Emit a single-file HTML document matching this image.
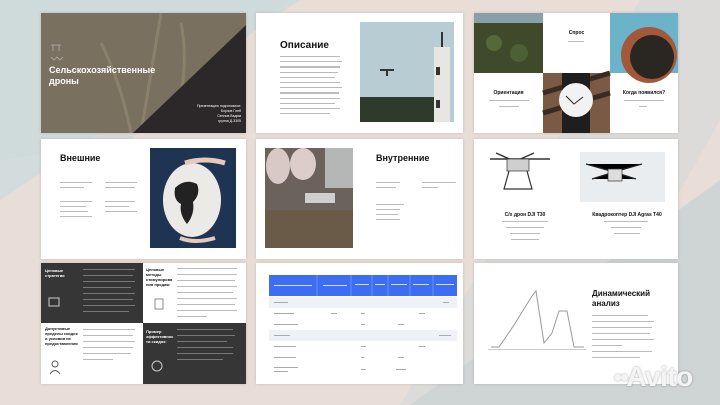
<!DOCTYPE html><html><head><meta charset="utf-8"><style>
*{margin:0;padding:0;box-sizing:border-box}
body{width:720px;height:405px;overflow:hidden;position:relative;font-family:"Liberation Sans",sans-serif;background:#e6dcd6}
.s{position:absolute;background:#fff;overflow:hidden;box-shadow:0 0 3px rgba(0,0,0,.15)}
.a{position:absolute}
.t{position:absolute;font-weight:bold;color:#111}
.l{position:absolute;height:1.2px;background:#bbb}
</style></head><body>
<svg class="a" style="left:0;top:0" width="720" height="405">
<rect width="720" height="405" fill="#e8ddd7"/>
<polygon points="0,0 300,0 0,200" fill="#d3dcdd"/>
<polygon points="640,0 720,0 720,120 560,405 400,405" fill="#dcdbd9"/>
<polygon points="720,180 720,405 410,405" fill="#cfd4d5"/>
<polygon points="0,0 290,0 130,140 0,160" fill="#cdd8da" opacity=".6"/>
</svg>

<div class="s" style="left:41px;top:13px;width:205px;height:120px;background:#7d7463">
<svg class="a" width="205" height="120"><rect width="205" height="120" fill="#7a705f"/><path d="M120 0 Q110 60 100 120 M140 10 Q150 60 130 120 M60 30 Q80 70 90 120" stroke="#8a806c" stroke-width="3" fill="none"/><polygon points="92,120 205,120 205,12" fill="#2c2829"/><g stroke="#bbb" stroke-width="1" fill="none" opacity=".7"><path d="M10 32h10M12 32v6M18 32v6M10 44l3 3 3-3 3 3 3-3"/></g></svg>
<div class="t" style="left:8px;top:52px;color:#fff;font-size:9px;line-height:11px">Сельскохозяйственные<br>дроны</div>
<div class="a" style="right:5px;top:91px;color:#fff;font-size:3.5px;line-height:5px;text-align:right">Презентацию подготовили:<br>Борзов Глеб<br>Сеннов Вадим<br>группа Д-3305</div>
</div>

<div class="s" style="left:256px;top:13px;width:207px;height:120px">
<div class="t" style="left:24px;top:27px;font-size:10px">Описание</div>
<div class="a" style="left:24px;top:43px;width:62px">
<div class="l" style="position:relative;margin-bottom:4px;width:60px"></div><div class="l" style="position:relative;margin-bottom:4px;width:62px"></div><div class="l" style="position:relative;margin-bottom:4px;width:60px"></div><div class="l" style="position:relative;margin-bottom:4px;width:58px"></div><div class="l" style="position:relative;margin-bottom:4px;width:55px"></div><div class="l" style="position:relative;margin-bottom:4px;width:60px"></div><div class="l" style="position:relative;margin-bottom:4px;width:62px"></div><div class="l" style="position:relative;margin-bottom:4px;width:59px"></div><div class="l" style="position:relative;margin-bottom:4px;width:60px"></div><div class="l" style="position:relative;margin-bottom:4px;width:55px"></div><div class="l" style="position:relative;margin-bottom:4px;width:60px"></div><div class="l" style="position:relative;width:50px"></div></div>
<svg class="a" style="left:104px;top:9px" width="94" height="100"><rect width="94" height="100" fill="#b8ccd3"/><rect y="75" width="80" height="25" fill="#2f3b2a"/><rect x="74" y="25" width="16" height="75" fill="#e8e6e2"/><path d="M82 10v15" stroke="#333" stroke-width="2"/><rect x="76" y="45" width="4" height="8" fill="#333"/><rect x="76" y="78" width="4" height="8" fill="#333"/><path d="M20 48h14 M27 48v6" stroke="#333" stroke-width="2"/></svg>
</div>

<div class="s" style="left:474px;top:13px;width:204px;height:120px">
<svg class="a" width="204" height="120"><rect width="69" height="60" fill="#3e4a2a"/><rect y="0" width="69" height="10" fill="#8aa0a8"/><circle cx="20" cy="30" r="8" fill="#55683a"/><circle cx="45" cy="40" r="9" fill="#4d6033"/><rect x="136" width="68" height="60" fill="#6cb2c9"/><circle cx="175" cy="42" r="28" fill="#a2593a"/><circle cx="178" cy="44" r="22" fill="#2a2622"/><rect x="69" y="60" width="67" height="60" fill="#7a5a44"/><path d="M69 80l67-20M69 100l67-20" stroke="#3a2a20" stroke-width="5"/><rect x="88" y="60" width="28" height="60" fill="#1e1e1e"/><circle cx="102" cy="87" r="17" fill="#f2f2f2"/><path d="M92 83l8 8 9-7" stroke="#222" fill="none"/></svg>
<div class="t" style="left:69px;width:67px;top:17px;text-align:center;font-size:5px">Спрос</div>
<div class="t" style="left:0;width:69px;top:77px;text-align:center;font-size:5px">Ориентация</div>
<div class="t" style="left:136px;width:68px;top:77px;text-align:center;font-size:5px">Когда появился?</div>
<div class="l" style="left:94px;top:28px;width:16px"></div><div class="l" style="left:15px;top:87px;width:40px"></div><div class="l" style="left:25px;top:93px;width:20px"></div><div class="l" style="left:150px;top:87px;width:40px"></div><div class="l" style="left:165px;top:93px;width:8px"></div>
</div>

<div class="s" style="left:41px;top:139px;width:205px;height:120px">
<div class="t" style="left:19px;top:14px;font-size:9px">Внешние</div>
<div class="l" style="left:19px;top:43px;width:32px"></div><div class="l" style="left:19px;top:48px;width:24px"></div><div class="l" style="left:64px;top:43px;width:32px"></div><div class="l" style="left:64px;top:48px;width:30px"></div>
<div class="l" style="left:19px;top:62px;width:32px"></div><div class="l" style="left:19px;top:67px;width:26px"></div><div class="l" style="left:19px;top:72px;width:28px"></div><div class="l" style="left:19px;top:77px;width:32px"></div><div class="l" style="left:64px;top:62px;width:30px"></div><div class="l" style="left:64px;top:67px;width:24px"></div><div class="l" style="left:64px;top:72px;width:32px"></div>
<svg class="a" style="left:109px;top:9px" width="86" height="100"><rect width="86" height="100" fill="#1f3452"/><ellipse cx="42" cy="52" rx="29" ry="37" fill="#eceae6"/><path d="M25 40q10-10 22-4 4 10-4 18 2 12-6 22-8-10-6-20-8-4-6-16z" fill="#222"/><path d="M35 15q20-6 40 0" stroke="#e5c9bb" stroke-width="5" fill="none"/><path d="M30 90q15 6 35 0" stroke="#e5c9bb" stroke-width="4" fill="none"/></svg>
</div>

<div class="s" style="left:256px;top:139px;width:207px;height:120px">
<svg class="a" style="left:9px;top:9px" width="88" height="100"><rect width="88" height="100" fill="#6b625b"/><ellipse cx="13" cy="18" rx="12" ry="18" fill="#d9c9c6"/><ellipse cx="38" cy="16" rx="13" ry="16" fill="#dccdca"/><rect x="60" y="0" width="28" height="40" fill="#b4b7b6"/><rect x="0" y="62" width="88" height="38" fill="#6a5a48"/><rect x="40" y="45" width="30" height="10" fill="#cfcfcf"/></svg>
<div class="t" style="left:120px;top:14px;font-size:9px">Внутренние</div>
<div class="l" style="left:120px;top:43px;width:24px"></div><div class="l" style="left:120px;top:48px;width:20px"></div><div class="l" style="left:166px;top:43px;width:34px"></div><div class="l" style="left:166px;top:48px;width:16px"></div>
<div class="l" style="left:120px;top:65px;width:28px"></div><div class="l" style="left:120px;top:70px;width:24px"></div><div class="l" style="left:120px;top:75px;width:22px"></div><div class="l" style="left:120px;top:80px;width:24px"></div>
</div>

<div class="s" style="left:474px;top:139px;width:204px;height:120px">
<svg class="a" width="204" height="120"><path d="M16 20h60 M22 14l18 8 M60 14l-18 8" stroke="#333" stroke-width="1.5"/><rect x="33" y="20" width="22" height="12" fill="#cfcfcf" stroke="#333" stroke-width=".7"/><path d="M35 32l-5 18h28l-5-18" stroke="#333" fill="none" stroke-width="1.2"/><rect x="106" y="13" width="85" height="50" fill="#e9edf0"/><path d="M112 25l28 8 28-8 M118 40l22-7 22 7" stroke="#222" stroke-width="1.3"/><rect x="134" y="30" width="14" height="12" fill="#ddd" stroke="#333" stroke-width=".7"/></svg>
<div class="t" style="left:0;width:102px;top:73px;text-align:center;font-size:5px">С/х дрон DJI T30</div>
<div class="t" style="left:102px;width:102px;top:73px;text-align:center;font-size:5px">Квадрокоптер DJI Agras T40</div>
<div class="l" style="left:28px;top:82px;width:46px"></div><div class="l" style="left:32px;top:88px;width:38px"></div><div class="l" style="left:36px;top:94px;width:30px"></div><div class="l" style="left:37px;top:100px;width:28px"></div>
<div class="l" style="left:130px;top:82px;width:44px"></div><div class="l" style="left:137px;top:88px;width:30px"></div><div class="l" style="left:140px;top:94px;width:26px"></div>
</div>

<div class="s" style="left:41px;top:263px;width:205px;height:121px">
<div class="a" style="left:0;top:0;width:102px;height:60px;background:#363636"></div>
<div class="a" style="left:102px;top:60px;width:103px;height:61px;background:#363636"></div>
<div class="t" style="left:4px;top:5px;color:#fff;font-size:4px;line-height:5px">Ценовые<br>стратегии</div>
<div class="t" style="left:105px;top:4px;font-size:4px;line-height:5px">Ценовые<br>методы<br>стимулирова<br>ния продаж:</div>
<div class="t" style="left:4px;top:63px;font-size:4px;line-height:5px">Допустимые<br>пределы скидок<br>и условия их<br>предоставления</div>
<div class="t" style="left:105px;top:66px;color:#fff;font-size:4px;line-height:5px">Пример<br>эффективнос<br>ти скидок:</div>
<svg class="a" width="205" height="121"><g stroke="#ccc" stroke-width="1" fill="none"><rect x="8" y="35" width="10" height="8"/><rect x="114" y="36" width="8" height="10" stroke="#888"/><circle cx="14" cy="101" r="3" stroke="#555"/><path d="M9 111q5-7 10 0" stroke="#555"/><circle cx="116" cy="103" r="5"/></g>
<g fill="#777"><rect x="42" y="6" width="52" height="1"/><rect x="42" y="12" width="50" height="1"/><rect x="42" y="18" width="52" height="1"/><rect x="42" y="24" width="48" height="1"/><rect x="42" y="30" width="52" height="1"/><rect x="42" y="36" width="50" height="1"/><rect x="42" y="42" width="52" height="1"/><rect x="42" y="48" width="46" height="1"/>
<rect x="136" y="5" width="60" height="1" fill="#bbb"/><rect x="136" y="11" width="60" height="1" fill="#bbb"/><rect x="136" y="17" width="58" height="1" fill="#bbb"/><rect x="136" y="23" width="60" height="1" fill="#bbb"/><rect x="136" y="29" width="56" height="1" fill="#bbb"/><rect x="136" y="35" width="60" height="1" fill="#bbb"/><rect x="136" y="41" width="58" height="1" fill="#bbb"/><rect x="136" y="47" width="60" height="1" fill="#bbb"/><rect x="136" y="53" width="30" height="1" fill="#bbb"/>
<rect x="42" y="66" width="52" height="1" fill="#bbb"/><rect x="42" y="72" width="50" height="1" fill="#bbb"/><rect x="42" y="78" width="52" height="1" fill="#bbb"/><rect x="42" y="84" width="50" height="1" fill="#bbb"/><rect x="42" y="90" width="48" height="1" fill="#bbb"/><rect x="42" y="96" width="30" height="1" fill="#bbb"/>
<rect x="136" y="66" width="56" height="1"/><rect x="136" y="72" width="58" height="1"/><rect x="136" y="78" width="50" height="1"/><rect x="136" y="84" width="56" height="1"/><rect x="136" y="90" width="56" height="1"/><rect x="136" y="96" width="46" height="1"/></g></svg>
</div>

<div class="s" style="left:256px;top:263px;width:207px;height:121px">
<svg class="a" width="207" height="121"><rect x="13" y="12" width="188" height="21" fill="#3d6df2"/><g stroke="#8aa6f5" stroke-width=".6"><path d="M61 12v21M95 12v21M116 12v21M132 12v21M154 12v21M177 12v21"/></g>
<rect x="13" y="34" width="188" height="11" fill="#eef1f6"/><rect x="13" y="67" width="188" height="11" fill="#eef1f6"/>
<g fill="#aaa"><rect x="18" y="39" width="14" height="1"/><rect x="18" y="50" width="20" height="1"/><rect x="18" y="61" width="24" height="1"/><rect x="18" y="72" width="16" height="1"/><rect x="18" y="83" width="22" height="1"/><rect x="18" y="94" width="22" height="1"/><rect x="18" y="104" width="24" height="1"/><rect x="18" y="108" width="14" height="1"/>
<rect x="75" y="50" width="6" height="1"/><rect x="105" y="50" width="4" height="1"/><rect x="105" y="61" width="4" height="1"/><rect x="105" y="83" width="5" height="1"/><rect x="105" y="94" width="3" height="1"/><rect x="105" y="106" width="5" height="1"/><rect x="163" y="50" width="6" height="1"/><rect x="163" y="83" width="6" height="1"/><rect x="142" y="61" width="6" height="1"/><rect x="142" y="94" width="6" height="1"/><rect x="140" y="106" width="10" height="1"/><rect x="187" y="39" width="6" height="1"/><rect x="183" y="72" width="12" height="1"/></g>
<g fill="#d6e0fb"><rect x="18" y="22" width="38" height="1"/><rect x="67" y="22" width="24" height="1"/><rect x="99" y="21" width="14" height="1"/><rect x="119" y="21" width="10" height="1"/><rect x="135" y="21" width="16" height="1"/><rect x="157" y="21" width="16" height="1"/><rect x="180" y="21" width="18" height="1"/></g></svg>
</div>

<div class="s" style="left:474px;top:263px;width:204px;height:121px">
<svg class="a" width="204" height="121"><polyline points="17,84 25,84 40,62 58,33 62,28 70,80 78,70 85,48 93,48 100,84 110,84" stroke="#9a9a9a" fill="none" stroke-width="1"/><rect x="14" y="86" width="98" height="1" fill="#ccc"/></svg>
<div class="t" style="left:118px;top:26px;font-size:8px;line-height:10px">Динамический<br>анализ</div>
<div class="l" style="left:118px;top:52px;width:56px"></div><div class="l" style="left:118px;top:58px;width:62px"></div><div class="l" style="left:118px;top:64px;width:60px"></div><div class="l" style="left:118px;top:70px;width:58px"></div><div class="l" style="left:118px;top:76px;width:62px"></div><div class="l" style="left:118px;top:82px;width:30px"></div><div class="l" style="left:118px;top:88px;width:60px"></div><div class="l" style="left:118px;top:94px;width:48px"></div>
</div>

<div class="a" style="left:613px;top:361px;z-index:5;white-space:nowrap;color:#f4f4f4;text-shadow:0 0 2px rgba(0,0,0,.35);font-size:28px;font-weight:bold;letter-spacing:-0.5px;line-height:32px"><span style="font-size:16px;vertical-align:4px;letter-spacing:-3px">●●</span>Avito</div>
</body></html>
